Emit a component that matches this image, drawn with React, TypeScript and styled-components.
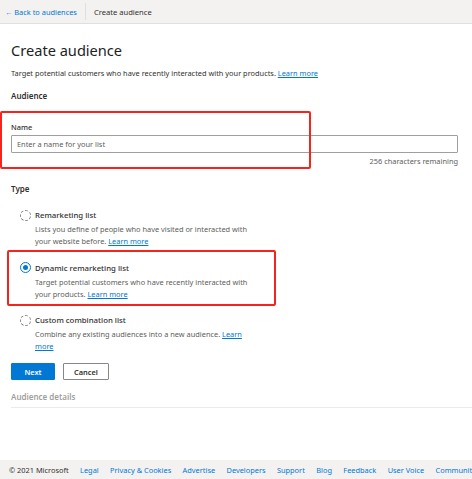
import React from "react";
import styled, { createGlobalStyle } from "styled-components";

const GlobalStyle = createGlobalStyle`
  html, body {
    margin: 0;
    padding: 0;
    background: #ffffff;
  }

  body {
    font-family: "Noto Sans", "Open Sans", sans-serif;
    color: #323130;
    font-size: 7.4px;
  }

  * {
    box-sizing: border-box;
  }
`;

const Page = styled.div`
  min-height: 479px;
  display: flex;
  flex-direction: column;
  overflow: hidden;
`;

const TopBar = styled.div`
  height: 24px;
  display: flex;
  align-items: center;
  padding-left: 5px;

  background: #f3f2f1;
  border-bottom: 1px solid #e1dfdd;
`;

const BackLink = styled.a`
  color: #0078d4;
  text-decoration: none;
  font-size: 7.4px;
`;

const BarDivider = styled.span`
  width: 1px;
  height: 17px;
  margin: 0 8px 0 8px;
  background: #e1dfdd;
`;

const Crumb = styled.span`
  font-size: 7.6px;
  color: #323130;
`;

const Main = styled.main`
  padding: 0 14px 0 11px;
  flex: 1;
`;

const Title = styled.h1`
  margin: 16px 0 0;
  font-size: 14.6px;
  line-height: 20px;
  font-weight: 400;
  color: #201f1e;
`;

const Intro = styled.p`
  margin: 8px 0 0;
  line-height: 11px;
`;

const Link = styled.a`
  color: #0078d4;
  text-decoration: underline;
`;

const SectionHeading = styled.h2<{ $muted?: boolean; $top: number }>`
  margin: ${({ $top }) => $top}px 0 0;
  font-size: 8px;
  line-height: 12px;
  font-weight: 600;
  color: ${({ $muted }) => ($muted ? "#a19f9d" : "#323130")};
`;

const Field = styled.div`
  position: relative;
  margin-top: 20px;
  display: flex;
  flex-direction: column;
`;

const Highlight = styled.div<{ $top: number; $left: number; $width: number; $height: number }>`
  position: absolute;
  top: ${({ $top }) => $top}px;
  left: ${({ $left }) => $left}px;
  width: ${({ $width }) => $width}px;
  height: ${({ $height }) => $height}px;

  border: 2px solid #f5241c;
  border-radius: 2px;
  pointer-events: none;
`;

const FieldLabel = styled.label`
  line-height: 11px;
  font-weight: 500;
  color: #323130;
`;

const TextInput = styled.input`
  margin-top: 2px;
  height: 18px;
  width: 100%;
  padding: 0 5px;

  border: 1px solid #a19f9d;
  border-radius: 1px;
  font-family: inherit;
  font-size: 7.4px;
  color: #323130;

  &::placeholder {
    color: #605e5c;
  }
`;

const Counter = styled.div`
  margin-top: 3px;
  text-align: right;
  line-height: 11px;
  color: #605e5c;
`;

const Options = styled.div`
  margin-top: 14px;
  padding-left: 9px;
  display: flex;
  flex-direction: column;
  gap: 14.5px;
`;

const Option = styled.div`
  position: relative;
  display: grid;
  grid-template-columns: 11px 1fr;
  column-gap: 4px;
`;

const Radio = styled.span<{ $checked?: boolean }>`
  width: 11px;
  height: 11px;
  margin-top: 0.5px;
  border-radius: 50%;
  border: 1px ${({ $checked }) => ($checked ? "solid #0078d4" : "dashed #8a8886")};
  display: flex;
  align-items: center;
  justify-content: center;

  &::after {
    content: "";
    display: ${({ $checked }) => ($checked ? "block" : "none")};
    width: 5px;
    height: 5px;
    border-radius: 50%;
    background: #0078d4;
  }
`;

const OptionTitle = styled.span`
  line-height: 12px;
  font-size: 7.8px;
  color: #323130;
  font-weight: 500;
`;

const OptionText = styled.p`
  grid-column: 2;
  margin: 2px 0 0;
  max-width: 216px;
  line-height: 12px;
  color: #605e5c;
`;

const Actions = styled.div`
  margin-top: 11px;
  display: flex;
  gap: 8px;
`;

const Button = styled.button<{ $primary?: boolean }>`
  height: 17px;
  padding: 0;
  width: ${({ $primary }) => ($primary ? 44 : 46)}px;
  font-family: inherit;
  font-size: 7.4px;
  font-weight: 600;
  border-radius: 1px;
  border: 1px solid ${({ $primary }) => ($primary ? "#0078d4" : "#8a8886")};
  background: ${({ $primary }) => ($primary ? "#0078d4" : "#ffffff")};
  color: ${({ $primary }) => ($primary ? "#ffffff" : "#323130")};
`;

const Rule = styled.div`
  margin: 4px -14px 0 0;
  height: 1px;
  background: #edebe9;
`;

const Footer = styled.footer`
  height: 19px;
  display: flex;
  align-items: center;
  gap: 11.4px;
  padding-left: 9px;
  background: #f3f2f1;
  white-space: nowrap;
  overflow: hidden;
  font-size: 7.4px;
`;

const Copyright = styled.span`
  color: #323130;
`;

const FooterLink = styled.a`
  color: #0078d4;
  text-decoration: none;
`;

const footerLinks = [
  "Legal",
  "Privacy & Cookies",
  "Advertise",
  "Developers",
  "Support",
  "Blog",
  "Feedback",
  "User Voice",
  "Community",
];

export default function App() {
  return (
    <Page>
      <GlobalStyle />
      <TopBar>
        <BackLink>← Back to audiences</BackLink>
        <BarDivider />
        <Crumb>Create audience</Crumb>
      </TopBar>

      <Main>
        <Title>Create audience</Title>
        <Intro>
          Target potential customers who have recently interacted with your
          products. <Link>Learn more</Link>
        </Intro>
        <SectionHeading $top={11}>Audience</SectionHeading>

        <Field>
          <Highlight $top={-11} $left={-11} $width={311} $height={58} />
          <FieldLabel>Name</FieldLabel>
          <TextInput placeholder="Enter a name for your list" />
          <Counter>256 characters remaining</Counter>
        </Field>

        <SectionHeading $top={16}>Type</SectionHeading>

        <Options>
          <Option>
            <Radio />
            <OptionTitle>Remarketing list</OptionTitle>
            <OptionText>
              Lists you define of people who have visited or interacted with
              your website before. <Link>Learn more</Link>
            </OptionText>
          </Option>
          <Option>
            <Highlight $top={-12} $left={-13} $width={269} $height={56} />
            <Radio $checked />
            <OptionTitle>Dynamic remarketing list</OptionTitle>
            <OptionText>
              Target potential customers who have recently interacted with
              your products. <Link>Learn more</Link>
            </OptionText>
          </Option>
          <Option>
            <Radio />
            <OptionTitle>Custom combination list</OptionTitle>
            <OptionText>
              Combine any existing audiences into a new audience.{" "}
              <Link>Learn more</Link>
            </OptionText>
          </Option>
        </Options>

        <Actions>
          <Button $primary>Next</Button>
          <Button>Cancel</Button>
        </Actions>

        <SectionHeading $muted $top={11}>
          Audience details
        </SectionHeading>
        <Rule />
      </Main>

      <Footer>
        <Copyright>© 2021 Microsoft</Copyright>
        {footerLinks.map((label) => (
          <FooterLink key={label}>{label}</FooterLink>
        ))}
      </Footer>
    </Page>
  );
}
